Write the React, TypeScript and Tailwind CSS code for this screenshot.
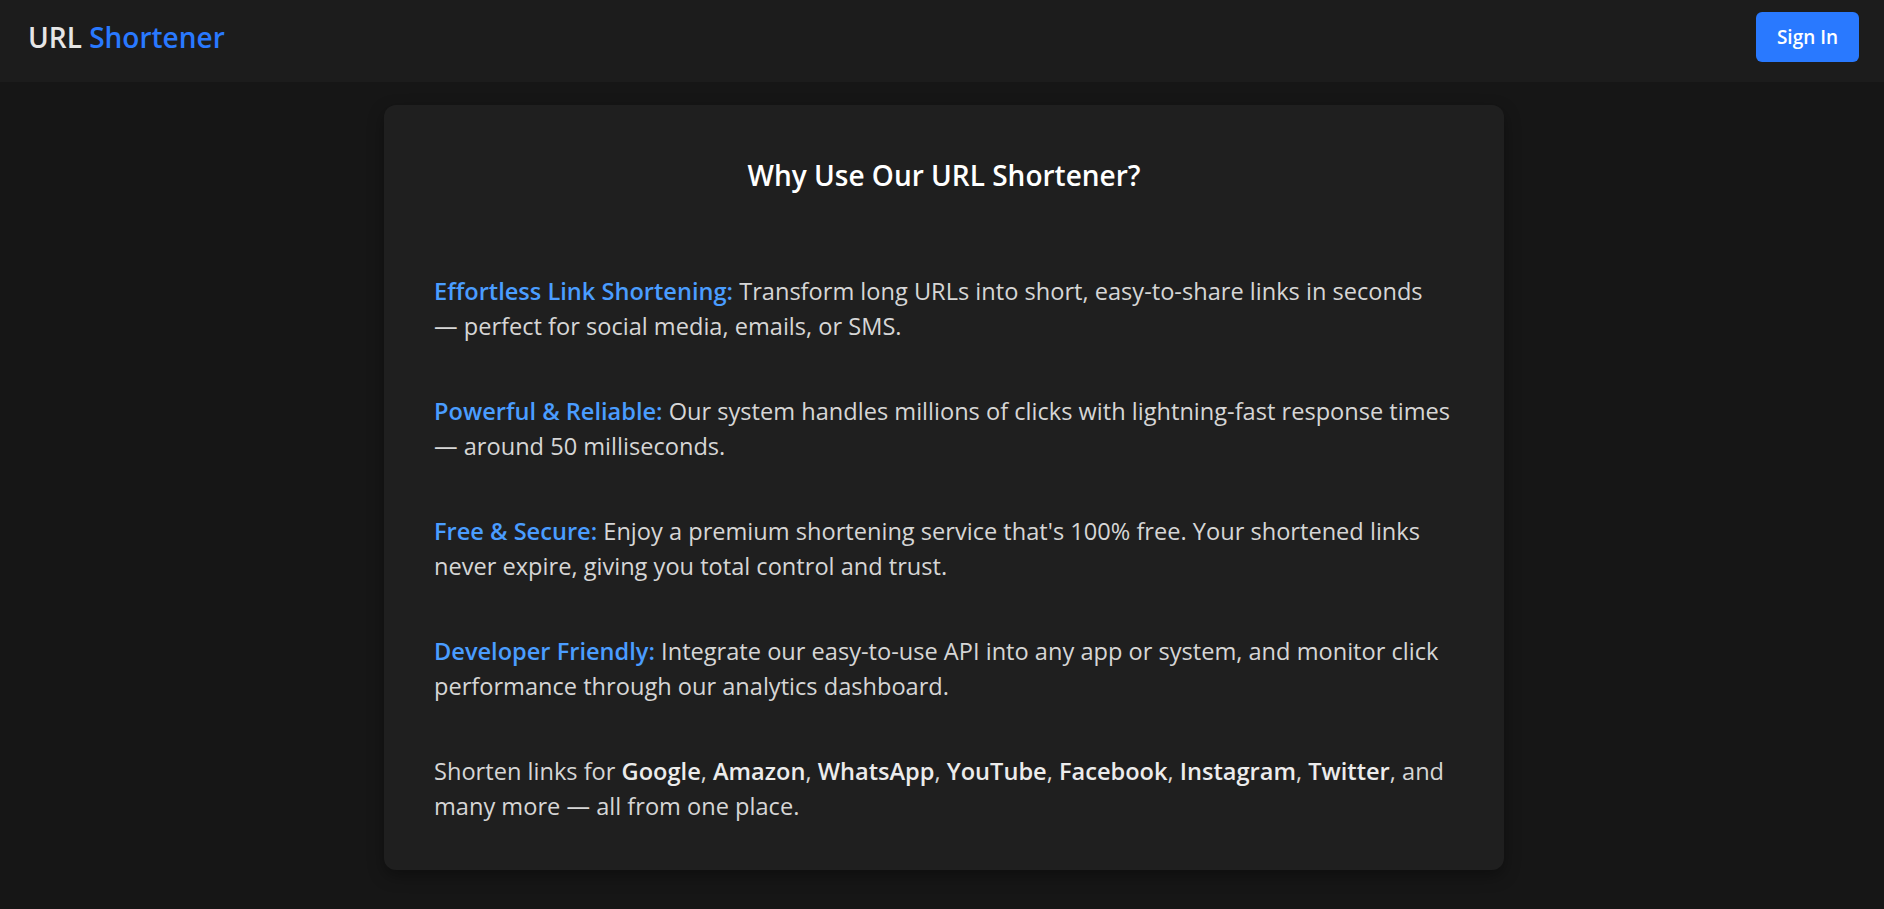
import React from "react";

const font = { fontFamily: '"Open Sans", "Noto Sans", sans-serif' };

function Label({ children }: { children: React.ReactNode }) {
  return <span className="font-semibold text-[#4a9dff]">{children}</span>;
}

function B({ children }: { children: React.ReactNode }) {
  return <span className="font-semibold text-[#ececec]">{children}</span>;
}

export default function App() {
  return (
    <div className="min-h-[909px] bg-[#161616] pb-[39px]" style={font}>
      <header className="flex h-[82px] items-center justify-between bg-[#1c1c1c] pl-[28px] pr-[25px] pb-[8px]">
        <div className="text-[28px] font-semibold leading-none">
          <span className="text-[#e6e6e6]">URL</span>{" "}
          <span className="text-[#2979ff]">Shortener</span>
        </div>
        <button className="flex h-[50px] w-[103px] items-center justify-center rounded-[6px] bg-[#2979ff] text-[19px] font-semibold text-white">
          Sign In
        </button>
      </header>

      <main className="mx-auto mt-[23px] w-[1120px] translate-x-[2px] rounded-[12px] bg-[#1f1f1f] px-[50px] pt-[50px] pb-[46px] shadow-[0_6px_16px_rgba(0,0,0,0.35)]">
        <h2 className="mb-[79px] text-center text-[28px] font-semibold leading-[40px] text-white">
          Why Use Our URL Shortener?
        </h2>

        <div className="flex flex-col gap-[50px] text-[23.6px] leading-[35px] text-[#d6d6d6] whitespace-nowrap">
          <p>
            <Label>Effortless Link Shortening:</Label> Transform long URLs into short, easy-to-share links in seconds
            <br />— perfect for social media, emails, or SMS.
          </p>
          <p>
            <Label>Powerful &amp; Reliable:</Label> Our system handles millions of clicks with lightning-fast response times
            <br />— around 50 milliseconds.
          </p>
          <p>
            <Label>Free &amp; Secure:</Label> Enjoy a premium shortening service that's 100% free. Your shortened links
            <br />never expire, giving you total control and trust.
          </p>
          <p>
            <Label>Developer Friendly:</Label> Integrate our easy-to-use API into any app or system, and monitor click
            <br />performance through our analytics dashboard.
          </p>
          <p>
            Shorten links for <B>Google</B>, <B>Amazon</B>, <B>WhatsApp</B>, <B>YouTube</B>, <B>Facebook</B>,{" "}
            <B>Instagram</B>, <B>Twitter</B>, and
            <br />many more — all from one place.
          </p>
        </div>
      </main>
    </div>
  );
}
